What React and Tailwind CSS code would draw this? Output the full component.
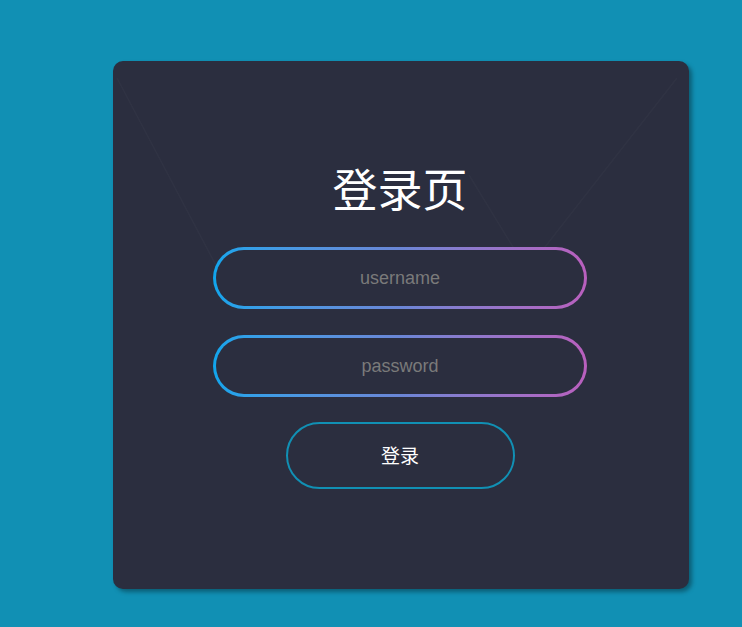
import React, { useState } from "react";

function GradientInput({ placeholder, type = "text", value, onChange }) {
  return (
    <div className="w-[374px] h-[62px] rounded-full p-[3px] bg-gradient-to-r from-[#0ea5ec] via-[#6a86d6] to-[#b95fbe]">
      <input
        type={type}
        value={value}
        onChange={onChange}
        placeholder={placeholder}
        className="w-full h-full rounded-full bg-[#2b2e3f] text-center text-[18px] text-white placeholder:text-[#7a7a7a] outline-none"
        style={{ fontFamily: '"Liberation Sans", Arial, sans-serif' }}
      />
    </div>
  );
}

export default function App() {
  const [username, setUsername] = useState("");
  const [password, setPassword] = useState("");

  return (
    <div className="w-[742px] h-[627px] bg-[#1190b4] overflow-hidden pt-[61px]">
      <div
        className="relative ml-[113px] w-[576px] h-[528px] rounded-[10px] bg-[#2b2e3f] shadow-[3px_3px_4px_rgba(0,0,0,0.35)] flex flex-col items-center pt-[100px] pr-[2px]"
        style={{ fontFamily: '"Noto Sans CJK SC", "Liberation Sans", sans-serif' }}
      >
        {/* faint background lines */}
        <svg className="absolute inset-0 pointer-events-none" width="576" height="528">
          <polyline points="4,17 116,229" fill="none" stroke="rgba(255,255,255,0.025)" strokeWidth="1.5" />
          <polyline points="356,114 414,209 564,17" fill="none" stroke="rgba(255,255,255,0.025)" strokeWidth="1.5" />
        </svg>

        <h1 className="relative text-[45px] leading-[53px] text-white font-normal">登录页</h1>

        <div className="relative flex flex-col items-center gap-[26px] mt-[33px]">
          <GradientInput placeholder="username" value={username} onChange={(e) => setUsername(e.target.value)} />
          <GradientInput placeholder="password" type="password" value={password} onChange={(e) => setPassword(e.target.value)} />
        </div>

        <button className="relative mt-[25px] w-[229px] h-[67px] rounded-full border-2 border-[#1190b4] text-white text-[19px] bg-transparent">
          登录
        </button>
      </div>
    </div>
  );
}
